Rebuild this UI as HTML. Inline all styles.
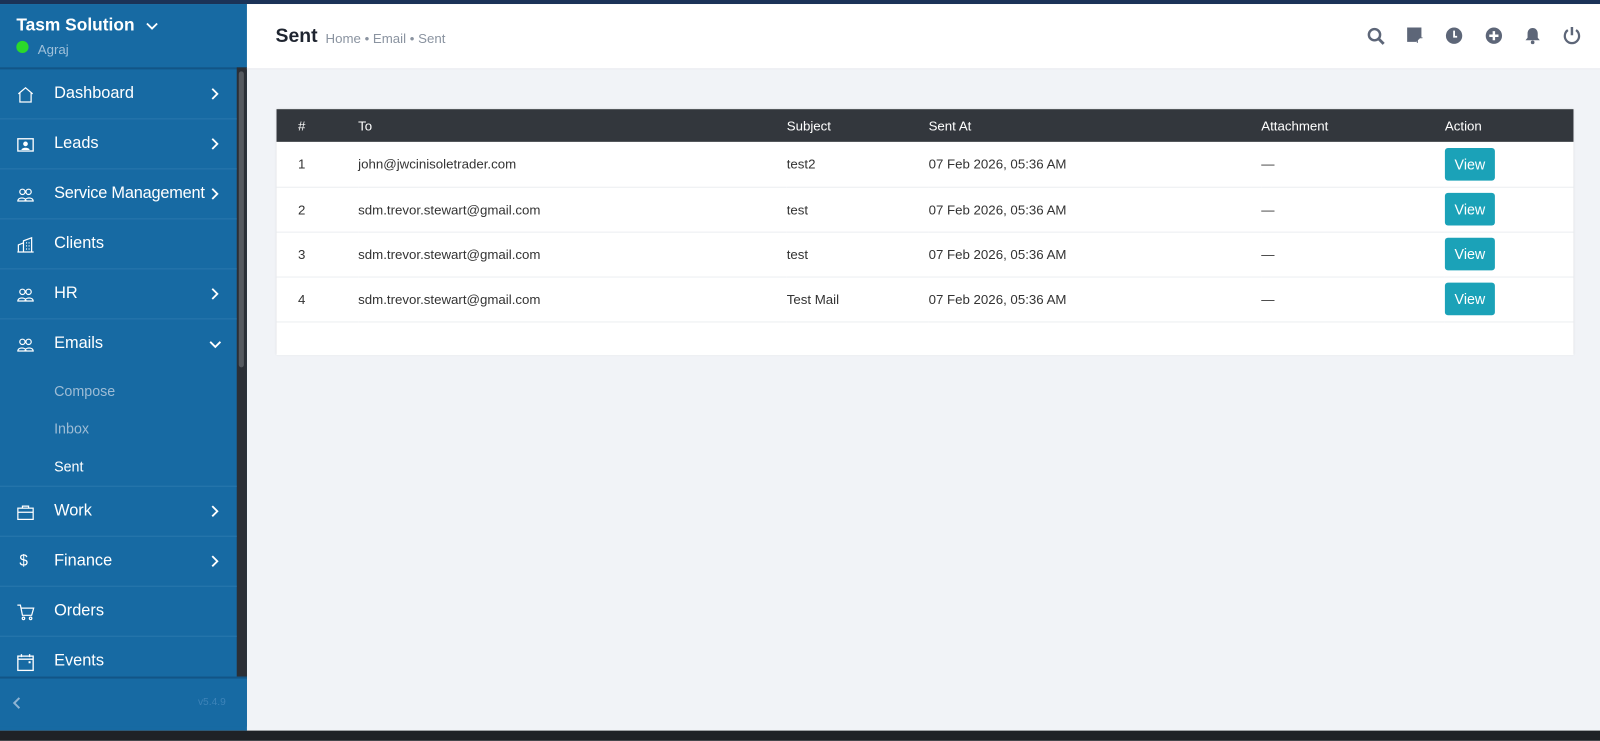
<!DOCTYPE html>
<html><head><meta charset="utf-8"><style>
*{box-sizing:border-box;margin:0;padding:0}
html,body{width:1600px;height:738px;overflow:hidden}
body{background:#f1f3f7;font-family:"Liberation Sans",Arial,sans-serif}
#w{position:absolute;left:0;top:0;width:1568px;height:723px;transform:scale(1.020408);transform-origin:0 0;background:#f1f3f7}
.topline{position:absolute;left:0;top:0;width:1568px;height:4px;background:#1b3358}
.bottom{position:absolute;left:0;top:716px;width:1568px;height:10px;background:#1f2226}
.sb{position:absolute;left:0;top:4px;width:242px;height:712px;background:#176aa3}
.sbh{position:absolute;left:0;top:0;width:242px;height:64px;border-bottom:2px solid #125587;background:#176aa3}
.brand{position:absolute;left:16px;top:11px;color:#fff;font-size:17px;font-weight:bold}
.user{position:absolute;left:37px;top:37px;color:#9fc0da;font-size:13px}
.dot{position:absolute;left:16px;top:36px;width:12px;height:12px;border-radius:50%;background:#2bd92b}
.scroll{position:absolute;left:232px;top:66px;width:10px;height:600px;background:#2b2f36}
.thumb{position:absolute;left:234px;top:70px;width:5px;height:290px;background:#55595f;border-radius:3px}
.it{position:absolute;left:0;width:232px;height:49px;border-bottom:1px solid #2a77ad;color:#fff;font-size:16px}
.it span{position:absolute;left:53px;top:15px}
.it svg.ic{position:absolute;left:16px;top:16px}
.it .ch{position:absolute;left:206px;top:17px}
.sub{position:absolute;left:53px;font-size:14px;color:#9dbcd5}
.foot{position:absolute;left:0;top:663px;width:242px;height:49px;background:#176aa3;border-top:2px solid #125587}
.hdr{position:absolute;left:242px;top:4px;width:1326px;height:64px;background:#fff;border-bottom:1px solid #e6e8ee}
.card{position:absolute;left:271px;top:107px;width:1271px;height:241px;background:#fff;box-shadow:0 0 2px rgba(0,0,0,.12)}
.thbg{position:absolute;left:0;top:0;width:1271px;height:32px;background:#33373d}
table{position:relative;border-collapse:collapse;width:100%;font-size:13px;color:#333}
th{background:transparent;color:#fff;font-weight:normal;text-align:left;height:32px;padding:0;border:0}
td{height:44px;border-bottom:1px solid #eceef1;padding:0}
.btn{display:inline-block;background:#1ba2b8;color:#fff;font-size:14px;border-radius:3px;width:49px;height:32px;line-height:32px;text-align:center}
</style></head><body><div id="w">
<div class="topline"></div>
<div class="sb">
<div class="sbh"><div class="brand">Tasm Solution <svg width="12" height="8" viewBox="0 0 12 8" style="margin-left:6px"><path d="M1 1l5 5 5-5" stroke="#fff" stroke-width="1.8" fill="none"/></svg></div><div class="dot"></div><div class="user">Agraj</div></div>
</div>
<div class="scroll"></div><div class="thumb"></div>
<div class="it" style="top:68px"><svg class="ic" width="18" height="18" viewBox="0 0 18 18"><path d="M2 8L9 2l7 6M3.5 7v9h11V7" stroke="#fff" fill="none" stroke-width="1.2"/></svg><span>Dashboard</span><svg class="ch" width="9" height="14" viewBox="0 0 9 14"><path d="M2 2l5 5-5 5" stroke="#fff" stroke-width="1.8" fill="none"/></svg></div>
<div class="it" style="top:117px"><svg class="ic" width="18" height="18" viewBox="0 0 18 18"><rect x="1.5" y="3" width="15" height="12" stroke="#fff" fill="none" stroke-width="1.3"/><circle cx="9" cy="8" r="2.3" fill="#fff"/><path d="M5 14c0-3 8-3 8 0z" fill="#fff"/></svg><span>Leads</span><svg class="ch" width="9" height="14" viewBox="0 0 9 14"><path d="M2 2l5 5-5 5" stroke="#fff" stroke-width="1.8" fill="none"/></svg></div>
<div class="it" style="top:166px"><svg class="ic" width="18" height="18" viewBox="0 0 18 18"><g stroke="#fff" fill="none" stroke-width="1.2"><circle cx="6" cy="6" r="2.6"/><circle cx="12" cy="6" r="2.6"/><path d="M1.5 15c0-4 8-4 8 0zM8.5 15c0-4 8-4 8 0z"/></g></svg><span style="letter-spacing:-0.2px">Service Management</span><svg class="ch" width="9" height="14" viewBox="0 0 9 14"><path d="M2 2l5 5-5 5" stroke="#fff" stroke-width="1.8" fill="none"/></svg></div>
<div class="it" style="top:215px"><svg class="ic" width="18" height="18" viewBox="0 0 18 18"><g stroke="#fff" fill="none" stroke-width="1.2"><path d="M2 16V9l5-2v9M7 16V5l8-3v14M1 16h16"/><path d="M9.5 7h1M12 7h1M9.5 10h1M12 10h1M9.5 13h1M12 13h1"/></g></svg><span>Clients</span></div>
<div class="it" style="top:264px"><svg class="ic" width="18" height="18" viewBox="0 0 18 18"><g stroke="#fff" fill="none" stroke-width="1.2"><circle cx="6" cy="6" r="2.6"/><circle cx="12" cy="6" r="2.6"/><path d="M1.5 15c0-4 8-4 8 0zM8.5 15c0-4 8-4 8 0z"/></g></svg><span>HR</span><svg class="ch" width="9" height="14" viewBox="0 0 9 14"><path d="M2 2l5 5-5 5" stroke="#fff" stroke-width="1.8" fill="none"/></svg></div>
<div class="it" style="top:313px;height:164px"><svg class="ic" width="18" height="18" viewBox="0 0 18 18"><g stroke="#fff" fill="none" stroke-width="1.2"><circle cx="6" cy="6" r="2.6"/><circle cx="12" cy="6" r="2.6"/><path d="M1.5 15c0-4 8-4 8 0zM8.5 15c0-4 8-4 8 0z"/></g></svg><span>Emails</span><svg style="position:absolute;left:204px;top:20px" width="14" height="9" viewBox="0 0 14 9"><path d="M2 2l5 5 5-5" stroke="#fff" stroke-width="1.8" fill="none"/></svg>
<div class="sub" style="top:62px">Compose</div><div class="sub" style="top:99px">Inbox</div><div class="sub" style="top:136px;color:#fff">Sent</div></div>
<div class="it" style="top:477px"><svg class="ic" width="18" height="18" viewBox="0 0 18 18"><g stroke="#fff" fill="none" stroke-width="1.2"><rect x="1.5" y="5" width="15" height="11"/><path d="M6 5V3h6v2M1.5 9h15"/></g></svg><span>Work</span><svg class="ch" width="9" height="14" viewBox="0 0 9 14"><path d="M2 2l5 5-5 5" stroke="#fff" stroke-width="1.8" fill="none"/></svg></div>
<div class="it" style="top:526px"><span style="left:19px;top:15px;font-size:15px">$</span><span>Finance</span><svg class="ch" width="9" height="14" viewBox="0 0 9 14"><path d="M2 2l5 5-5 5" stroke="#fff" stroke-width="1.8" fill="none"/></svg></div>
<div class="it" style="top:575px"><svg class="ic" width="18" height="18" viewBox="0 0 18 18"><g stroke="#fff" fill="none" stroke-width="1.2"><path d="M1 2h3l2 10h9l2-7H5"/><circle cx="7" cy="15" r="1.2"/><circle cx="14" cy="15" r="1.2"/></g></svg><span>Orders</span></div>
<div class="it" style="top:624px;border-bottom:none"><svg class="ic" width="18" height="18" viewBox="0 0 18 18"><g stroke="#fff" fill="none" stroke-width="1.3"><rect x="1.5" y="3" width="15" height="14"/><path d="M1.5 6h15M5 1v3M13 1v3"/></g><rect x="12" y="8" width="2" height="2" fill="#fff"/></svg><span>Events</span></div>
<div class="foot"><svg style="position:absolute;left:12px;top:17px" width="10" height="14" viewBox="0 0 10 14"><path d="M7 2L2 7l5 5" stroke="#8fb4d3" stroke-width="2" fill="none"/></svg><div style="position:absolute;left:194px;top:18px;font-size:10px;color:#3d83b8">v5.4.9</div></div>
<div class="hdr">
<div style="position:absolute;left:28px;top:21px;font-size:19px;font-weight:bold;color:#1f2530">Sent</div>
<div style="position:absolute;left:77px;top:26px;font-size:13px;color:#8a93a0">Home • Email • Sent</div>
<svg style="position:absolute;left:1097px;top:22px" width="20" height="20" viewBox="0 0 20 20"><circle cx="8" cy="8" r="5.5" stroke="#5d6678" stroke-width="2.4" fill="none"/><path d="M12 12l5 5" stroke="#5d6678" stroke-width="2.8"/></svg>
<svg style="position:absolute;left:1136px;top:22px" width="18" height="18" viewBox="0 0 18 18"><path d="M1 1h14v9l-5 5H1z" fill="#5d6678"/><path d="M11 16v-5h5" stroke="#5d6678" stroke-width="1" fill="none"/></svg>
<svg style="position:absolute;left:1174px;top:22px" width="18" height="18" viewBox="0 0 18 18"><circle cx="9" cy="9" r="8" fill="#5d6678"/><path d="M9 4v6h3" stroke="#fff" stroke-width="1.8" fill="none"/></svg>
<svg style="position:absolute;left:1213px;top:22px" width="18" height="18" viewBox="0 0 18 18"><circle cx="9" cy="9" r="8" fill="#5d6678"/><path d="M9 4.5v9M4.5 9h9" stroke="#fff" stroke-width="2.4"/></svg>
<svg style="position:absolute;left:1251px;top:22px" width="18" height="18" viewBox="0 0 18 18"><path d="M9 1.5c-3 0-5 2.3-5 5.5v4l-2 2.5h14L14 11V7c0-3.2-2-5.5-5-5.5z" fill="#5d6678"/><circle cx="9" cy="15.5" r="1.8" fill="#5d6678"/></svg>
<svg style="position:absolute;left:1289px;top:21px" width="19" height="19" viewBox="0 0 19 19"><path d="M5.5 4.5A7 7 0 1 0 13.5 4.5" stroke="#5d6678" stroke-width="2.2" fill="none"/><path d="M9.5 1.5v8" stroke="#5d6678" stroke-width="2.4"/></svg>
</div>
<div class="card"><div class="thbg"></div><table>
<tr><th style="width:80px;padding-left:21px">#</th><th style="width:420px">To</th><th style="width:139px">Subject</th><th style="width:326px">Sent At</th><th style="width:180px">Attachment</th><th>Action</th></tr>
<tr><td style="padding-left:21px">1</td><td>john@jwcinisoletrader.com</td><td>test2</td><td>07 Feb 2026, 05:36 AM</td><td>—</td><td><span class="btn">View</span></td></tr>
<tr><td style="padding-left:21px">2</td><td>sdm.trevor.stewart@gmail.com</td><td>test</td><td>07 Feb 2026, 05:36 AM</td><td>—</td><td><span class="btn">View</span></td></tr>
<tr><td style="padding-left:21px">3</td><td>sdm.trevor.stewart@gmail.com</td><td>test</td><td>07 Feb 2026, 05:36 AM</td><td>—</td><td><span class="btn">View</span></td></tr>
<tr><td style="padding-left:21px">4</td><td>sdm.trevor.stewart@gmail.com</td><td>Test Mail</td><td>07 Feb 2026, 05:36 AM</td><td>—</td><td><span class="btn">View</span></td></tr>
</table></div>
<div class="bottom"></div>
</div></body></html>
